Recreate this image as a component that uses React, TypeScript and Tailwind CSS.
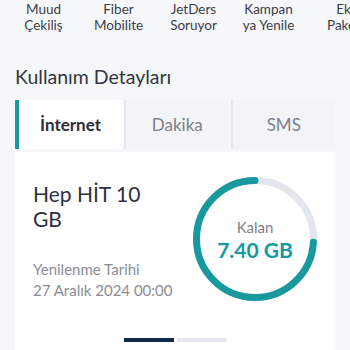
const shortcuts = [
  ["Muud", "Çekiliş"],
  ["Fiber", "Mobilite"],
  ["JetDers", "Soruyor"],
  ["Kampan", "ya Yenile"],
  ["Ek", "Paket"],
];

const tabs = ["İnternet", "Dakika", "SMS"];

const UsageRing = ({ percent }: { percent: number }) => {
  const r = 58.5;
  const c = 2 * Math.PI * r;
  return (
    <div className="relative w-[124px] h-[124px] shrink-0">
      <svg width="124" height="124" viewBox="0 0 124 124" className="absolute inset-0">
        <circle cx="62" cy="62" r={r} fill="none" stroke="#e4e6ee" strokeWidth="7" />
        <circle
          cx="62"
          cy="62"
          r={r}
          fill="none"
          stroke="#17999e"
          strokeWidth="7"
          strokeLinecap="round"
          strokeDasharray={`${c * percent} ${c}`}
          transform="rotate(-90 62 62) scale(1 -1) translate(0 -124)"
        />
      </svg>
      <div className="absolute inset-0 flex flex-col items-center justify-center pt-[1px]">
        <span className="text-[15px] leading-[20px] text-[#7d808a]">Kalan</span>
        <span className="text-[21px] leading-[26px] font-bold text-[#17999e]">7.40 GB</span>
      </div>
    </div>
  );
};

const App = () => {
  return (
    <div
      className="w-[350px] h-[350px] overflow-hidden bg-[#f6f7f9]"
      style={{ fontFamily: "Lato, 'Noto Sans', sans-serif" }}
    >
      <div className="flex pl-[6px] pt-[1px] whitespace-nowrap">
        {shortcuts.map(([a, b]) => (
          <div key={a} className="w-[75px] shrink-0 text-center text-[13.5px] leading-[16px] text-[#3a3d47]">
            <div>{a}</div>
            <div>{b}</div>
          </div>
        ))}
      </div>

      <h2 className="px-[15px] mt-[32px] text-[19.5px] leading-[24px] text-[#33363f]">
        Kullanım Detayları
      </h2>

      <div className="mx-[15px] mt-[11px] flex gap-[2px]">
        {tabs.map((t, i) => (
          <div
            key={t}
            className={
              i === 0
                ? "w-[107px] h-[49px] flex items-center justify-center bg-white border-l-[4px] border-[#17999e] text-[17px] font-bold text-[#2b2e38]"
                : "flex-1 h-[49px] flex items-center justify-center bg-[#f3f4f7] border-l-[2px] border-[#e7e8ed] text-[17px] text-[#7d808a]"
            }
          >
            {t}
          </div>
        ))}
      </div>

      <div className="mx-[15px] mt-[3px] bg-white h-[220px] pt-[25px] px-[18px]">
        <div className="flex justify-between">
          <div className="pt-[4px]">
            <div className="text-[21px] leading-[25px] text-[#2d3040] w-[130px]">Hep HİT 10 GB</div>
            <div className="mt-[28px] text-[15px] leading-[21px] text-[#8a8d96]">
              <div>Yenilenme Tarihi</div>
              <div>27 Aralık 2024 00:00</div>
            </div>
          </div>
          <UsageRing percent={0.74} />
        </div>
        <div className="flex justify-center gap-[3px] mt-[37px]">
          <div className="w-[50px] h-[4px] bg-[#0f2a4a]" />
          <div className="w-[50px] h-[4px] bg-[#e6e7ee]" />
        </div>
      </div>
    </div>
  );
};

export default App;
